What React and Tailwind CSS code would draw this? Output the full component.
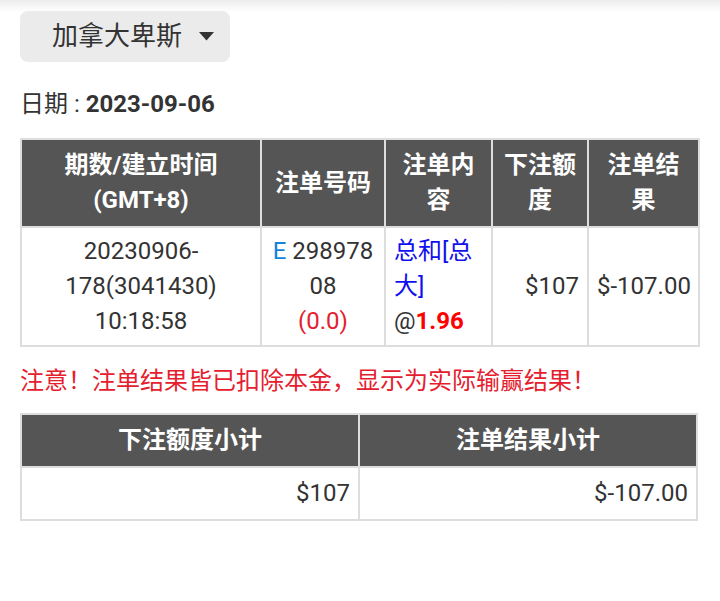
import React from "react";

// bet record summary
const cell = "border-2 border-[#dddddd] px-[8px]";
const head = "border-2 border-[#dddddd] bg-[#555555] text-white font-bold px-[9px] py-[8px] text-center";

const App = () => {
  return (
    <div
      className="min-h-screen bg-white text-[#333333] text-[24px] leading-[35px]"
      style={{ fontFamily: 'Roboto, "Noto Sans CJK SC", sans-serif' }}
    >
      {/* faint shadow from top bar */}
      <div className="h-[12px] bg-gradient-to-b from-[#ececec] to-white" />

      <div className="px-[20px]">
        {/* region dropdown */}
        <div className="mt-[-1px] flex h-[51px] w-[210px] items-center rounded-[8px] bg-[#ebebeb] pl-[32px]">
          <span className="text-[26px] text-[#333333]">加拿大卑斯</span>
          <svg className="ml-[17px]" width="15" height="9" viewBox="0 0 15 9">
            <path d="M0 0 H15 L7.5 8.5 Z" fill="#333333" />
          </svg>
        </div>

        {/* date */}
        <div className="mt-[25px] leading-[35px]">
          日期 : <span className="font-bold">2023-09-06</span>
        </div>

        {/* bet table */}
        <table className="mt-[16px] w-[678px] table-fixed border-collapse border-2 border-[#dddddd]">
          <colgroup>
            <col className="w-[240px]" />
            <col className="w-[124px]" />
            <col className="w-[107px]" />
            <col className="w-[96px]" />
            <col className="w-[111px]" />
          </colgroup>
          <thead>
            <tr className="h-[85px]">
              <th className={head}>
                期数/建立时间
                <br />
                (GMT+8)
              </th>
              <th className={head}>注单号码</th>
              <th className={head}>注单内容</th>
              <th className={head}>下注额度</th>
              <th className={head}>注单结果</th>
            </tr>
          </thead>
          <tbody>
            <tr className="h-[119px]">
              <td className={`${cell} text-center`}>
                20230906-
                <br />
                178(3041430)
                <br />
                10:18:58
              </td>
              <td className={`${cell} text-center`}>
                <div className="break-all">
                  <span className="text-[#1483d8]">E</span> 298978 08
                </div>
                <div className="text-[#e5202e]">(0.0)</div>
              </td>
              <td className={`${cell} text-left`}>
                <div className="text-[#1010ee]">总和[总大]</div>
                <div>
                  @<span className="font-bold text-[#ff0000]">1.96</span>
                </div>
              </td>
              <td className={`${cell} text-right`}>$107</td>
              <td className={`${cell} text-right`}>$-107.00</td>
            </tr>
          </tbody>
        </table>

        {/* notice */}
        <div className="mt-[17px] text-[#e5202e]">注意！注单结果皆已扣除本金，显示为实际输赢结果！</div>

        {/* subtotal table */}
        <table className="mt-[14px] w-[678px] table-fixed border-collapse border-2 border-[#dddddd]">
          <thead>
            <tr className="h-[53px]">
              <th className={head}>下注额度小计</th>
              <th className={head}>注单结果小计</th>
            </tr>
          </thead>
          <tbody>
            <tr className="h-[53px]">
              <td className={`${cell} text-right`}>$107</td>
              <td className={`${cell} text-right`}>$-107.00</td>
            </tr>
          </tbody>
        </table>
      </div>
    </div>
  );
};

export default App;
